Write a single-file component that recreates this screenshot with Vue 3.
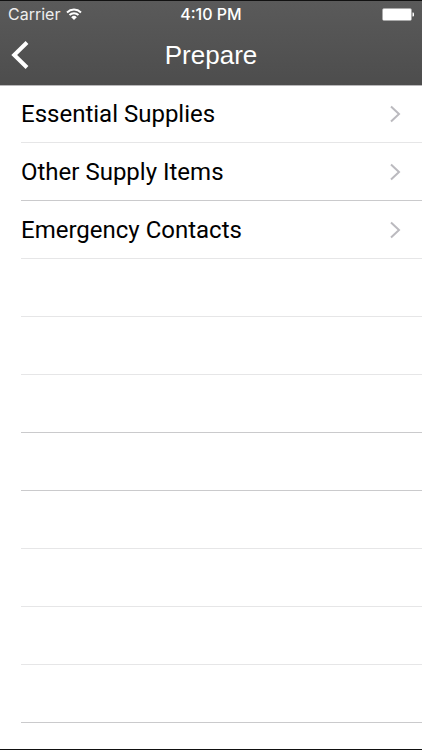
<script setup>
const items = [
  { label: 'Essential Supplies', strong: false },
  { label: 'Other Supply Items', strong: true },
  { label: 'Emergency Contacts', strong: false },
]
const emptyRows = [false, false, true, true, false, false, false, true]
</script>

<template>
  <div class="screen">
    <header class="top">
      <div class="status">
        <div class="carrier">
          <span>Carrier</span>
          <svg class="wifi" viewBox="0 0 16 12" aria-hidden="true">
            <path d="M1 4.4a10.2 10.2 0 0 1 14 0M3.500 7.1a6.6 6.6 0 0 1 9 0" />
            <path class="dot" d="M8 12 5.2 9.2a4 4 0 0 1 5.6 0z" />
          </svg>
        </div>
        <time class="clock">4:10 PM</time>
        <div class="power">
          <svg class="battery" viewBox="0 0 32 13" aria-hidden="true">
            <rect class="shell" x=".5" y=".5" width="29" height="12" rx="1.5" />
            <rect class="charge" x="1" y="1" width="28" height="11" rx=".5" />
            <path class="charge" d="M30.500 4.500h.5a1 1 0 0 1 1 1v2a1 1 0 0 1-1 1h-.5z" />
          </svg>
        </div>
      </div>
      <nav class="bar">
        <button class="back" type="button" aria-label="Back">
          <svg viewBox="0 0 18 28" aria-hidden="true"><path d="M16 1.500 3.200 14 16 26.500" /></svg>
        </button>
        <h1>Prepare</h1>
      </nav>
    </header>
    <main>
      <ul class="list">
        <li v-for="item in items" :key="item.label">
          <a class="row" :class="{ strong: item.strong }" href="#">
            <span>{{ item.label }}</span>
            <svg class="chevron" viewBox="0 0 12 18" aria-hidden="true"><path d="m2 1.500 8 7.500-8 7.500" /></svg>
          </a>
        </li>
      </ul>
      <div v-for="(strong, i) in emptyRows" :key="i" class="row" :class="{ strong }"></div>
    </main>
  </div>
</template>

<style>
body {
  margin: 0;
  background: #fff;
}
</style>

<style scoped>
.screen {
  box-sizing: border-box;
  display: flex;
  flex-direction: column;
  min-height: 100vh;
  border-bottom: 1px solid #111;
  background: #fff;
  font-family: Roboto, "Liberation Sans", sans-serif;
}
.top {
  padding-bottom: 2px;
  border-top: 1px solid #111;
  background: linear-gradient(#5a5a5a, #4d4d4d);
  color: #fff;
}
.status {
  display: grid;
  grid-template-columns: 1fr auto 1fr;
  align-items: center;
  height: 26px;
  padding: 0 8px;
  font-family: Inter, "Liberation Sans", sans-serif;
  font-size: 16px;
  line-height: 20px;
}
.carrier {
  display: flex;
  align-items: center;
  gap: 6px;
  color: #eee;
}
.wifi {
  width: 16px;
  height: 12px;
  fill: none;
  stroke: #fff;
  stroke-width: 2;
}
.wifi .dot {
  fill: #fff;
  stroke: none;
}
.clock {
  font-weight: 500;
}
.power {
  display: flex;
  justify-content: flex-end;
}
.battery {
  width: 32px;
  height: 13px;
}
.shell {
  fill: none;
  stroke: #aaa;
}
.charge {
  fill: #fff;
}
.bar {
  display: grid;
  grid-template-columns: 1fr auto 1fr;
  align-items: center;
  height: 56px;
  padding: 0 11px;
}
.back {
  width: 18px;
  height: 28px;
  padding: 0;
  border: 0;
  background: none;
}
.back svg {
  display: block;
  width: 18px;
  height: 28px;
  fill: none;
  stroke: #fff;
  stroke-width: 4;
}
h1 {
  margin: 0;
  font: 400 26px/32px "Liberation Sans", Arial, sans-serif;
}
main {
  flex: 1;
  box-shadow: inset 0 1px #b9b8ba;
}
.list {
  margin: 0;
  padding: 0;
  list-style: none;
}
.row {
  box-sizing: border-box;
  display: flex;
  align-items: center;
  justify-content: space-between;
  height: 58px;
  margin-left: 21px;
  padding-right: 21px;
  border-bottom: 1px solid #e6e6e7;
  color: #000;
  font-size: 24px;
  line-height: 30px;
  text-decoration: none;
}
.row.strong {
  border-bottom-color: #cacacc;
}
.chevron {
  width: 12px;
  height: 18px;
  fill: none;
  stroke: #bbbabf;
  stroke-width: 2;
}
</style>
